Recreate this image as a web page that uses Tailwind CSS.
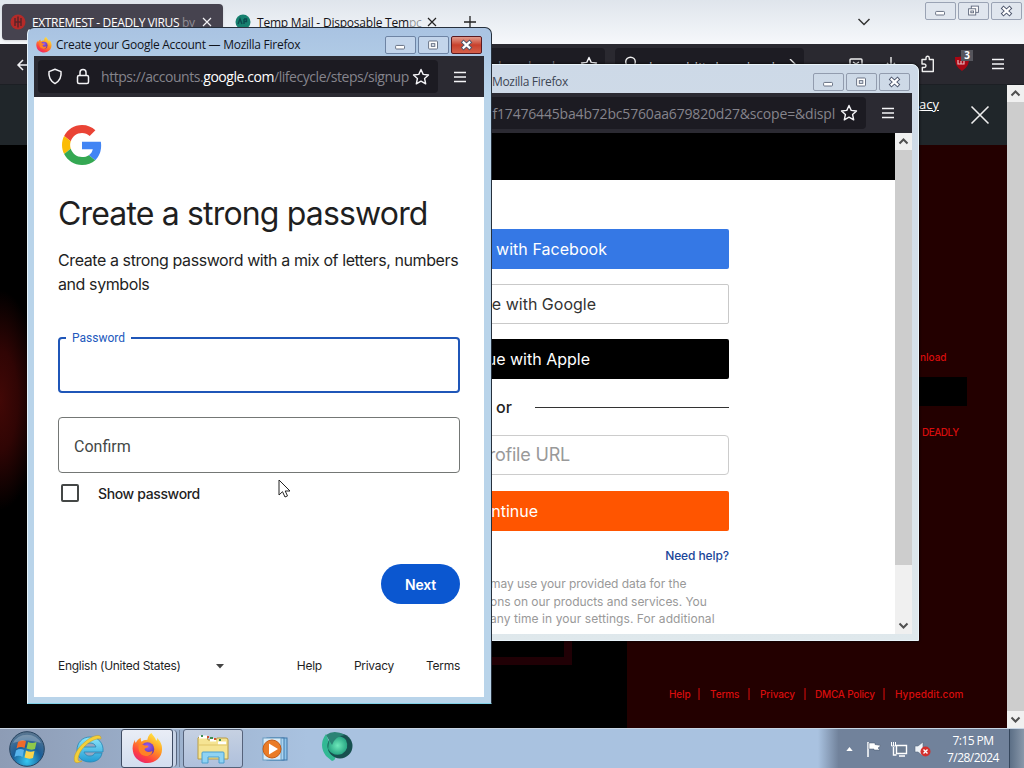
<!DOCTYPE html>
<html lang="en">
<head>
<meta charset="utf-8">
<title>Desktop</title>
<script src="https://cdn.jsdelivr.net/npm/@tailwindcss/browser@4"></script>
</head>
<body class="w-[1024px] h-[768px] overflow-hidden bg-black">
<svg class="absolute w-0 h-0">
  <defs>
    <linearGradient id="fxg" x1=".8" y1="0" x2=".2" y2="1"><stop offset="0" stop-color="#fff14a"/><stop offset=".4" stop-color="#ff9a22"/><stop offset=".75" stop-color="#ff4140"/><stop offset="1" stop-color="#e4207a"/></linearGradient>
    <radialGradient id="fxp" cx=".5" cy=".3" r=".7"><stop offset="0" stop-color="#9a5cf0"/><stop offset="1" stop-color="#5b2fa8"/></radialGradient>
    <symbol id="firefox" viewBox="0 0 32 32">
      <path fill="url(#fxg)" d="M30 11c-1-3-3-4-4-6 0 2 0 2-1 3-1-4-4-6-5-8-3 2-4 5-4 7-3 0-5 1-6 2-1-1-1-3-1-4C7 6 5 8 4 10 3 10 3 8 3 7 1 11 0 15 1 19c1 7 8 12 15 12 8 0 15-6 15-14 0-2 0-4-1-6z"/>
      <circle cx="16" cy="16.500" r="7" fill="url(#fxp)"/>
      <path fill="#ff8226" d="M7 12c3-1 5 0 6 1 2 0 4 0 4 1-1 2-4 1-4 3 1 3 5 3 8 1.500 0 4-4 6-8 5-5-1-7-6-6-11.500z"/>
    </symbol>
    <symbol id="star" viewBox="0 0 18 18"><path d="M9 1.500l2.200 4.900 5.300.6-3.900 3.600 1.100 5.200L9 13.200l-4.700 2.600 1.100-5.200L1.500 7l5.300-.6z" fill="none" stroke="#f5f5f8" stroke-width="1.400" stroke-linejoin="round"/></symbol>
    <symbol id="menu" viewBox="0 0 14 12"><path d="M1 1.500h12M1 6h12M1 10.500h12" stroke="#f5f5f8" stroke-width="1.300"/></symbol>
    <symbol id="min" viewBox="0 0 30 18"><rect x="9.500" y="9.500" width="10" height="4" rx="1" fill="#fff" stroke="#5a6478"/></symbol>
    <symbol id="max" viewBox="0 0 30 18"><rect x="9.500" y="4.500" width="10" height="9" rx="1" fill="#fff" stroke="#5a6478"/><rect x="12.500" y="7.500" width="4" height="3" fill="#dfe6f0" stroke="#5a6478"/></symbol>
    <symbol id="restore" viewBox="0 0 30 18"><rect x="12.500" y="3.500" width="8" height="7" fill="#fff" stroke="#5a6478"/><rect x="9.500" y="6.500" width="8" height="7" fill="#fff" stroke="#5a6478"/><rect x="12" y="9" width="3" height="2" fill="#fff" stroke="#5a6478"/></symbol>
    <symbol id="cls" viewBox="0 0 30 18"><path d="M10 4.500l10 9M20 4.500l-10 9" stroke="#4d566c" stroke-width="4.600"/><path d="M10.800 5.200l8.400 7.600M19.200 5.200l-8.400 7.600" stroke="#fff" stroke-width="2.400"/></symbol>
  </defs>
</svg>
<div class="relative flex flex-col w-[1024px] h-[768px] overflow-hidden font-['Open_Sans','Noto_Sans',sans-serif]">

  <!-- main browser window -->
  <div class="h-[44px] shrink-0 flex items-start bg-linear-to-b from-[#dfe5ec] to-[#f6f8fb]">
    <div class="ml-[2px] mt-[4px] w-[221px] h-[36px] rounded bg-[#46434f] flex items-center pl-[8px] shadow-sm">
      <svg class="w-4 h-4 shrink-0" viewBox="0 0 16 16"><circle cx="8" cy="8" r="7.500" fill="#b52a28"/><path d="M5 4v8M11 4v8M5 8h6M8 2.500v11" stroke="#5c2428" stroke-width="1.500"/></svg>
      <span class="ml-[6px] mt-[2px] w-[165px] whitespace-nowrap text-[12px] tracking-[-0.37px] text-white">EXTREMEST - DEADLY VIRUS <span class="text-white/40">by</span></span>
      <svg class="w-[10px] h-[10px] ml-[5px] shrink-0" viewBox="0 0 10 10"><path d="M1 1l8 8M9 1L1 9" stroke="#f2f2f5" stroke-width="1.200"/></svg>
    </div>
    <div class="mt-[4px] h-[36px] w-[226px] flex items-center pl-[12px]">
      <svg class="w-4 h-4 shrink-0" viewBox="0 0 16 16"><circle cx="8" cy="8" r="7.500" fill="#16806f"/><path d="M3 10l2-5 2 5M9 5v5M9 5h2.500v2.500H9" stroke="#0b4b4f" fill="none" stroke-width="1.400"/></svg>
      <span class="ml-[6px] mt-[2px] w-[166px] whitespace-nowrap text-[12px] tracking-[-0.22px] text-[#15141a]">Temp Mail - Disposable Tem<span class="text-black/40">pc</span></span>
      <svg class="w-[10px] h-[10px] ml-[4px] shrink-0" viewBox="0 0 10 10"><path d="M1 1l8 8M9 1L1 9" stroke="#222" stroke-width="1.200"/></svg>
    </div>
    <svg class="w-3 h-3 mt-[16px] ml-[15px]" viewBox="0 0 12 12"><path d="M6 0v12M0 6h12" stroke="#222" stroke-width="1.300"/></svg>
    <svg class="w-[14px] h-[10px] mt-[17px] ml-[381px]" viewBox="0 0 14 10"><path d="M1.500 2l5.500 5.500L12.500 2" stroke="#333" stroke-width="1.500" fill="none"/></svg>
    <div class="ml-auto mr-[2px] mt-[2px] flex gap-[2px]">
      <svg class="w-[31px] h-[18px] border border-[#9aa3b4] rounded-[2px] bg-[#e0e6ee]" viewBox="0 0 30 18"><use href="#min"/></svg>
      <svg class="w-[31px] h-[18px] border border-[#9aa3b4] rounded-[2px] bg-[#e0e6ee]" viewBox="0 0 30 18"><use href="#restore"/></svg>
      <svg class="w-[31px] h-[18px] border border-[#9aa3b4] rounded-[2px] bg-[#e0e6ee]" viewBox="0 0 30 18"><use href="#cls"/></svg>
    </div>
  </div>
  <div class="h-[41px] shrink-0 bg-[#2a2930] border-b border-[#1c1f24] flex items-start">
    <svg class="w-4 h-4 ml-[16px] mt-[13px] shrink-0" viewBox="0 0 16 16"><path d="M14 8H2M7 3L2 8l5 5" stroke="#f2f2f5" stroke-width="1.500" fill="none"/></svg>
    <div class="ml-[68px] mt-[4px] w-[505px] h-[32px] rounded bg-[#1d1c23] flex justify-end pt-[8px] pr-[7px]"><span class="text-[14px] leading-[16px] mt-[3px] text-[#77767e] mr-[25px] tracking-tight">virus-download</span><svg class="w-[18px] h-[18px]"><use href="#star"/></svg></div>
    <div class="ml-[10px] mt-[4px] w-[189px] h-[32px] rounded bg-[#1d1c23] flex pt-[8px] pl-[8px]">
      <svg class="w-4 h-4 shrink-0" viewBox="0 0 16 16"><circle cx="7.500" cy="6" r="4.800" stroke="#eee" stroke-width="1.400" fill="none"/></svg>
      <span class="ml-[10px] mt-[3px] text-[14px] leading-[17px] text-[#d8d8dd] whitespace-nowrap">hypeddit download</span>
      <svg class="w-3 h-3 ml-auto mr-[6px] mt-[3px]" viewBox="0 0 12 12"><path d="M4 0l6 6-6 6" stroke="#eee" fill="none" stroke-width="1.400"/></svg>
    </div>
    <svg class="w-4 h-4 ml-[44px] mt-[13px] shrink-0" viewBox="0 0 16 16"><path d="M2 12V3q0-1 1-1h10q1 0 1 1v9M5 5l3 2 3-2" stroke="#eee" stroke-width="1.400" fill="none"/></svg>
    <svg class="w-4 h-4 ml-[19px] mt-[13px] shrink-0" viewBox="0 0 16 16"><path d="M8 0v11M4 6l4 4 4-4" stroke="#eee" stroke-width="1.400" fill="none"/></svg>
    <svg class="w-[18px] h-[18px] ml-[20px] mt-[11px] shrink-0" viewBox="0 0 18 18"><path d="M3 4.500h4V3q0-1.700 1.600-1.700T10.300 3v1.500h4v12h-11v-4h2q1.700 0 1.700-1.700T5.300 9H3z" stroke="#eee" stroke-width="1.400" fill="none" stroke-linejoin="round"/></svg>
    <div class="relative ml-[16px] mt-[9px] w-[20px] h-[20px]">
      <svg class="w-[20px] h-[20px]" viewBox="0 0 20 20"><path d="M2 4q6 0 7-1 1 1 7 1 1 9-7 14Q1 13 2 4z" fill="#a80713"/><path d="M5 7v4h3V8M8 11h3V7" stroke="#e8b9bd" stroke-width="1.200" fill="none"/></svg>
      <span class="absolute left-[8px] top-[-3px] w-[12px] h-[11px] bg-[#55555c] text-white text-[10px] leading-[11px] font-bold text-center">3</span>
    </div>
    <svg class="w-[14px] h-[12px] ml-[18px] mt-[14px]"><use href="#menu"/></svg>
  </div>
  <div class="h-[643px] shrink-0 flex">
    <div class="w-[1007px] flex flex-col">
      <div class="h-[60px] bg-[#20262a] flex pl-[919px]">
        <span class="w-[38px] mt-[10px] text-[13px] leading-[18px] text-white underline">acy</span>
        <svg class="w-[20px] h-[20px] mt-[20px] ml-[13px]" viewBox="0 0 20 20"><path d="M1.500 1.500l17 17M18.500 1.500l-17 17" stroke="#eee" stroke-width="1.600"/></svg>
      </div>
      <div class="flex-1 flex">
        <div class="w-[627px] bg-black bg-[radial-gradient(ellipse_40px_110px_at_0px_255px,#420806_0%,#300504_45%,#000_100%)] pt-[480px] pl-[480px]">
          <div class="w-[92px] h-[40px] border-8 border-[#200005] bg-black"></div>
        </div>
        <div class="w-[380px] bg-[#230000] text-[#d80d0d] font-['Inter',sans-serif] font-medium text-[10px] leading-[12px] flex flex-col">
          <span class="pl-[293px] pt-[206px]">nload</span>
          <div class="ml-[285px] mt-[14px] w-[55px] h-[29px] bg-black"></div>
          <span class="pl-[295px] pt-[20px] tracking-[-0.5px]">DEADLY</span>
          <div class="mt-[250px] pl-[42px] flex whitespace-nowrap tracking-[-0.1px]">
            <span class="w-[28px]">Help</span><span class="w-[13px]">|</span><span class="w-[37px]">Terms</span><span class="w-[13px]">|</span><span class="w-[43px]">Privacy</span><span class="w-[12px]">|</span><span class="w-[67px] tracking-[-0.2px]">DMCA Policy</span><span class="w-[13px]">|</span><span class="tracking-[0.1px]">Hypeddit.com</span>
          </div>
        </div>
      </div>
    </div>
    <div class="w-[17px] bg-[#cdcdcd] flex flex-col justify-between">
      <svg class="w-[17px] h-[17px] bg-[#f0f0f0]" viewBox="0 0 17 17"><path d="M4.500 10.500l4-4 4 4" stroke="#505050" stroke-width="2" fill="none"/></svg>
      <svg class="w-[17px] h-[17px] bg-[#f0f0f0]" viewBox="0 0 17 17"><path d="M4.500 6.500l4 4 4-4" stroke="#505050" stroke-width="2" fill="none"/></svg>
    </div>
  </div>

  <!-- taskbar -->
  <div class="h-[40px] shrink-0 flex items-center bg-linear-to-r from-[#8d9cb5] via-[#a9c2e0] via-30% to-[#a9c2e0] border-t border-[#c8d5e4]">
    <svg class="w-[36px] h-[36px] ml-[9px] shrink-0" viewBox="0 0 36 36">
      <defs><radialGradient id="orb" cx=".5" cy=".85" r=".85"><stop offset="0" stop-color="#35c8f2"/><stop offset=".5" stop-color="#1b5e98"/><stop offset="1" stop-color="#5e7890"/></radialGradient></defs>
      <circle cx="18" cy="18" r="17.300" fill="url(#orb)" stroke="#27435f"/>
      <path d="M9 11q4-3 8-.8L15.500 17q-4-2-8 .5z" fill="#ef6a2a"/><path d="M19 11q4 2 8.500 0L26 18q-4 1.500-8.500-.5z" fill="#8fc84a"/><path d="M7 19.500q4-2.500 8-.5l-1.500 7q-4-2.500-8 0z" fill="#58b4ec"/><path d="M17 19.500q4 2.200 8.500.5L24 27q-4 1.500-8.500-.5z" fill="#fbd44b"/>
      <path d="M4 12a15 13 0 0128 0q-14-5-28 0z" fill="#fff" opacity=".25"/>
    </svg>
    <svg class="w-[32px] h-[32px] ml-[28px] shrink-0" viewBox="0 0 32 32">
      <defs><linearGradient id="ieg" x1="0" y1="0" x2="0" y2="1"><stop offset="0" stop-color="#8ee6fb"/><stop offset="1" stop-color="#209bd3"/></linearGradient></defs>
      <path fill="url(#ieg)" stroke="#2587b5" stroke-width=".8" fill-rule="evenodd" d="M17 4C9 4 4 10 4 17s5 12 13 12c6 0 11-3 12-9h-7c-1 2-3 3-5 3-4 0-5-2-6-4h19C31 10 25 4 17 4zm-6 10c1-3 3-4 6-4s5 1 6 4z"/>
      <path d="M28 6C29 0 20 2 13 8 5 14-1 24 2 29c1 1 4 1 7-1-4 1-5-1-3-6C8 15 20 4 28 6z" fill="#f3cf3a" stroke="#c49b1d" stroke-width=".5"/>
    </svg>
    <div class="ml-[16px] w-[52px] h-[39px] border border-[#3f4c63] rounded-[3px] bg-linear-to-b from-[#e9edf6] to-[#d3deef] flex items-center justify-center shrink-0"><svg class="w-[31px] h-[31px]"><use href="#firefox"/></svg></div>
    <div class="w-[4px] h-[37px] border-r border-[#57657d] bg-[#c7d3e6] rounded-r shrink-0"></div><div class="w-[3px] h-[37px] border-r border-[#7888a0] shrink-0"></div>
    <div class="ml-[3px] w-[60px] h-[39px] border border-[#56637b] rounded-[3px] bg-linear-to-b from-[#c6d1e2] to-[#afc0dc] flex items-center justify-center shrink-0">
      <svg class="w-[34px] h-[32px]" viewBox="0 0 34 32"><path d="M3 4h8l1 3h8l1-2h9q2 0 2 2v19H2V5z" fill="#f5e493" stroke="#b99c45"/><path d="M3 4h8M14 7h6M22 10h8" stroke="#fff" stroke-width="3"/><path d="M3 12h28" stroke="#dfc569"/><path d="M5 3h2M14 5h3M23 7h2" stroke="#3e8f55" stroke-width="2"/><path d="M11 4h2M18 6h2" stroke="#d05332" stroke-width="2"/><path d="M6 30V20q0-1 1-1h20q1 0 1 1v10h-5v-6H12v6z" fill="#8fd3f3" stroke="#4a9fd0"/></svg>
    </div>
    <svg class="w-[28px] h-[28px] ml-[18px] shrink-0" viewBox="0 0 28 28"><rect x="9" y="3" width="17" height="22" fill="#8fc4ea" stroke="#4178aa"/><rect x="6" y="3" width="17" height="22" fill="#a9d3f0" stroke="#4178aa"/><rect x="2" y="3" width="18" height="22" fill="#d7ebf8" stroke="#6b9dc2"/><circle cx="11" cy="14" r="9" fill="#ea7b25" stroke="#c35a14"/><path d="M8 8.500l9 5.500-9 5.500z" fill="#fff"/></svg>
    <svg class="w-[32px] h-[32px] ml-[32px] mb-[3px] shrink-0" viewBox="0 0 32 32"><defs><radialGradient id="grn" cx=".5" cy=".5" r=".6"><stop offset="0" stop-color="#6ee8ba"/><stop offset="1" stop-color="#1a9878"/></radialGradient></defs><path d="M5 3Q-3 14 5 25l6 5q4-1 3-4Q8 20 8 11z" fill="#32b893"/><circle cx="19" cy="15" r="12.500" fill="#17504f"/><path d="M8 8Q19 2 25 9q4 9-4 14-9 3-14-5z" fill="url(#grn)"/><path d="M5 4Q13-2 24 4 14 5 11 14z" fill="#2b8375"/></svg>
    <div class="ml-auto h-full w-[206px] bg-linear-to-r from-transparent to-[#71829b] to-10% flex items-center pl-[28px]">
      <svg class="w-[7px] h-[4px] shrink-0" viewBox="0 0 8 5"><path d="M0 5l4-5 4 5z" fill="#fff"/></svg>
      <svg class="w-[16px] h-[16px] ml-[13px] shrink-0" viewBox="0 0 16 16"><path d="M2 1v15" stroke="#fff" stroke-width="1.500"/><path d="M3 2h6v1.500l6 1L12 7l2 2H8V8H3z" fill="#fff" stroke="#44546c" stroke-width=".5"/></svg>
      <svg class="w-[18px] h-[16px] ml-[8px] shrink-0" viewBox="0 0 18 16"><path d="M6.500 4.500h10v8h-10zM9 15h6M3.500 6v8h3" fill="#6c7c91" stroke="#fff" stroke-width="1.400"/><path d="M1.500 1v4h4V1M3.500 1v4" stroke="#fff" fill="none"/></svg>
      <svg class="w-[17px] h-[16px] ml-[6px] shrink-0" viewBox="0 0 17 16"><path d="M1 5h3l5-4v14l-5-4H1z" fill="#eef2f7" stroke="#596980" stroke-width=".6"/><circle cx="11.500" cy="10.500" r="5" fill="#d32f2c"/><path d="M9.500 8.500l4 4M13.500 8.500l-4 4" stroke="#fff" stroke-width="1.400"/></svg>
      <div class="ml-[14px] w-[56px] text-center text-[12px] leading-[17px] text-white whitespace-nowrap tracking-[-0.55px]">7:15 PM<br>7/28/2024</div>
      <div class="ml-auto w-[15px] h-full border-l border-[#35465c] bg-linear-to-r from-[#5c6f86] to-[#8998aa]"></div>
    </div>
  </div>

  <!-- sign-in popup in the background -->
  <div class="absolute left-[440px] top-[64px] w-[479px] h-[577px] rounded-t-[7px] border border-[#e9f4fa] bg-[#dae2ea] bg-linear-to-b from-[#cdd9e7] to-[#dfe8ec] flex flex-col pr-[6px] pb-[6px] shadow-[0_0_3px_#000]">
    <div class="h-[28px] flex shrink-0">
      <span class="pl-[51px] pt-[9px] text-[12px] leading-[16px] text-[#3d4654] tracking-[-0.33px]">Mozilla Firefox</span>
      <div class="ml-auto mr-[2px] mt-[8px] flex gap-[2px]">
        <svg class="w-[31px] h-[18px] border border-[#929cae] rounded-[2px]" viewBox="0 0 30 18"><use href="#min"/></svg>
        <svg class="w-[31px] h-[18px] border border-[#929cae] rounded-[2px]" viewBox="0 0 30 18"><use href="#max"/></svg>
        <svg class="w-[31px] h-[18px] border border-[#929cae] rounded-[2px]" viewBox="0 0 30 18"><use href="#cls"/></svg>
      </div>
    </div>
    <div class="h-[40px] shrink-0 bg-[#2b2a32] flex items-center">
      <div class="w-[425px] h-[32px] bg-[#1c1b22] rounded flex items-center justify-end pr-[8px]">
        <span class="mt-[2px] text-[14px] leading-[20px] text-[#85848c] whitespace-nowrap tracking-[-0.18px] mr-[5px]">f17476445ba4b72bc5760aa679820d27&amp;scope=&amp;displ</span>
        <svg class="w-[18px] h-[18px] shrink-0"><use href="#star"/></svg>
      </div>
      <svg class="w-[14px] h-[12px] ml-[15px]"><use href="#menu"/></svg>
    </div>
    <div class="flex-1 flex bg-white overflow-hidden">
      <div class="flex-1 flex flex-col font-['Inter',sans-serif]">
        <div class="h-[47px] bg-black shrink-0"></div>
        <div class="w-[288px] mt-[49px] flex flex-col text-[16px]">
          <div class="h-[40px] rounded-[2px] bg-[#3578e5] text-white flex items-center pl-[55px] tracking-[0.05px]">with Facebook</div>
          <div class="h-[40px] mt-[15px] rounded-[2px] border border-[#c9c9c9] text-[#333] flex items-center justify-end pr-[132px]">e with Google</div>
          <div class="h-[40px] mt-[15px] rounded-[2px] bg-black text-white flex items-center justify-end pr-[139px]">ue with Apple</div>
          <div class="h-[56px] flex items-center text-[#222] font-medium"><span class="pl-[55px] w-[94px]">or</span><span class="flex-1 h-px bg-[#333]"></span></div>
          <div class="h-[40px] rounded-[4px] border border-[#ccc] text-[#999] text-[18px] flex items-center justify-end pr-[158px] pb-px tracking-[-0.2px]">rofile URL</div>
          <div class="h-[40px] mt-[16px] rounded-[2px] bg-[#f50] text-white flex items-center justify-end pr-[191px]">ntinue</div>
          <a class="mt-[16px] h-[18px] text-right text-[12px] leading-[18px] font-medium tracking-[-0.1px] text-[#1a4699]">Need help?</a>
          <p class="mt-[10px] pl-[49px] text-[12px] leading-[17.5px] text-[#999] whitespace-nowrap"><span class="tracking-[-0.06px]">may use your provided data for the</span><br><span class="tracking-[-0.04px]">ons on our products and services. You</span><br><span class="tracking-[0.07px]">any time in your settings. For additional</span></p>
        </div>
      </div>
      <div class="w-[17px] bg-[#f0f0f0] flex flex-col">
        <svg class="w-[17px] h-[17px]" viewBox="0 0 17 17"><path d="M4.500 10.500l4-4 4 4" stroke="#505050" stroke-width="2" fill="none"/></svg>
        <div class="h-[415px] bg-[#cdcdcd]"></div>
        <svg class="w-[17px] h-[17px] mt-auto" viewBox="0 0 17 17"><path d="M4.500 6.500l4 4 4-4" stroke="#505050" stroke-width="2" fill="none"/></svg>
      </div>
    </div>
  </div>

  <!-- account creation popup -->
  <div class="absolute left-[27px] top-[27px] w-[465px] h-[677px] rounded-t-[7px] border border-[#26303c] border-l-[#e6f3fb] border-b-[#7fd0e6] bg-[#b7d2ea] bg-linear-to-b from-[#a9c3e2] to-[#b9d4ea] to-10% flex flex-col pl-[6px] pr-[7px] pb-[6px]">
    <div class="h-[28px] flex shrink-0">
      <svg class="w-4 h-4 ml-[2px] mt-[9px] shrink-0"><use href="#firefox"/></svg>
      <span class="pl-[4px] pt-[9px] text-[12px] leading-[16px] text-[#10141c] tracking-[-0.26px] whitespace-nowrap">Create your Google Account — Mozilla Firefox</span>
      <div class="ml-auto mr-[2px] mt-[8px] flex gap-[2px]">
        <svg class="w-[31px] h-[18px] border border-[#6e84a4] rounded-[2px] bg-[#c3d5eb]" viewBox="0 0 30 18"><use href="#min"/></svg>
        <svg class="w-[31px] h-[18px] border border-[#6e84a4] rounded-[2px] bg-[#c3d5eb]" viewBox="0 0 30 18"><use href="#max"/></svg>
        <svg class="w-[31px] h-[18px] border border-[#5a1a20] rounded-[2px] bg-linear-to-b from-[#e09a8c] via-[#c8402c] to-[#d4604a]" viewBox="0 0 30 18"><use href="#cls"/></svg>
      </div>
    </div>
    <div class="h-[41px] shrink-0 bg-[#2b2a32] flex items-center">
      <div class="ml-[4px] w-[400px] h-[33px] bg-[#1c1b22] rounded flex items-center">
        <svg class="w-[16px] h-[17px] ml-[9px] shrink-0" viewBox="0 0 16 17"><path d="M8 1.200l6 2.400q1 8-6 12-7-4-6-12z" fill="none" stroke="#f3f3f6" stroke-width="1.500" stroke-linejoin="round"/></svg>
        <svg class="w-[14px] h-[17px] ml-[13px] shrink-0" viewBox="0 0 14 17"><rect x="1.500" y="7.500" width="11" height="8" rx="1.500" fill="none" stroke="#f3f3f6" stroke-width="1.500"/><path d="M4 7V4.500a3 3 0 016 0V7" fill="none" stroke="#f3f3f6" stroke-width="1.500"/></svg>
        <span class="ml-[11px] mt-px w-[308px] text-[14px] leading-[20px] text-[#85848c] whitespace-nowrap tracking-[-0.45px]">https://accounts.<span class="text-white">google.com</span>/lifecycle/steps/signup</span>
        <svg class="w-[18px] h-[18px] ml-[3px] shrink-0"><use href="#star"/></svg>
      </div>
      <svg class="w-[14px] h-[12px] ml-[15px]"><use href="#menu"/></svg>
    </div>
    <div class="flex-1 bg-white px-[24px] pt-[28px] flex flex-col text-[#1f1f1f] font-['Inter',sans-serif]">
      <svg class="w-[40px] h-[40px] ml-[4px] shrink-0" viewBox="0 0 48 48"><path fill="#EA4335" d="M24 9.500c3.540 0 6.710 1.220 9.210 3.600l6.850-6.850C35.900 2.380 30.470 0 24 0 14.620 0 6.510 5.380 2.560 13.220l7.980 6.190C12.430 13.720 17.740 9.500 24 9.500z"/><path fill="#4285F4" d="M46.980 24.550c0-1.570-.15-3.090-.38-4.550H24v9.020h12.940c-.58 2.960-2.260 5.480-4.780 7.180l7.730 6c4.510-4.180 7.090-10.360 7.090-17.650z"/><path fill="#FBBC05" d="M10.530 28.590c-.48-1.450-.76-2.990-.76-4.590s.27-3.140.76-4.590l-7.980-6.190C.92 16.460 0 20.120 0 24c0 3.880.92 7.540 2.560 10.780l7.970-6.190z"/><path fill="#34A853" d="M24 48c6.480 0 11.930-2.130 15.890-5.810l-7.730-6c-2.150 1.450-4.920 2.300-8.160 2.300-6.260 0-11.570-4.220-13.470-9.910l-7.980 6.190C6.510 42.620 14.620 48 24 48z"/></svg>
      <h1 class="mt-[27px] text-[32px] leading-[44px] whitespace-nowrap tracking-[-0.84px]">Create a strong password</h1>
      <p class="mt-[12px] h-[48px] text-[16px] leading-[24px] whitespace-nowrap tracking-[-0.41px]">Create a strong password with a mix of letters, numbers<br>and symbols</p>
      <div class="relative mt-[41px] h-[56px] shrink-0 rounded-[4px] border-2 border-[#1f56b8]">
        <span class="absolute left-[6px] top-[-9px] px-[6px] bg-white font-['Roboto',sans-serif] text-[12px] leading-[16px] text-[#2259bd]">Password</span>
      </div>
      <div class="mt-[24px] h-[56px] shrink-0 rounded-[4px] border border-[#747775] flex items-center pl-[15px] text-[16px] text-[#444746] font-['Roboto',sans-serif] pt-[3px]">Confirm</div>
      <div class="mt-[11px] h-[18px] flex items-center">
        <span class="w-[18px] h-[18px] ml-[3px] border-2 border-[#444746] rounded-[2px]"></span>
        <span class="ml-[19px] text-[14px] font-medium tracking-[-0.36px]">Show password</span>
      </div>
      <button class="mt-[62px] self-end w-[79px] h-[40px] rounded-full bg-[#0b57d0] text-white text-[14px] font-semibold tracking-[-0.2px]">Next</button>
      <div class="mt-[54px] h-[16px] flex items-center text-[12px] tracking-[-0.28px] whitespace-nowrap">
        <span class="w-[158px]">English (United States)</span>
        <svg class="w-[8px] h-[5px]" viewBox="0 0 8 5"><path d="M0 0h8L4 4.500z" fill="#444"/></svg>
        <span class="ml-auto">Help</span><span class="ml-[32px]">Privacy</span><span class="ml-[32px]">Terms</span>
      </div>
    </div>
  </div>

  <!-- mouse pointer -->
  <svg class="absolute left-[277px] top-[478px] w-[15px] h-[22px]" viewBox="0 0 15 22"><path d="M2 2v15l3.500-3.300L8 19l2.500-1.100L8.200 13H13z" fill="#fff" stroke="#222" stroke-linejoin="round"/></svg>
</div>
</body>
</html>
